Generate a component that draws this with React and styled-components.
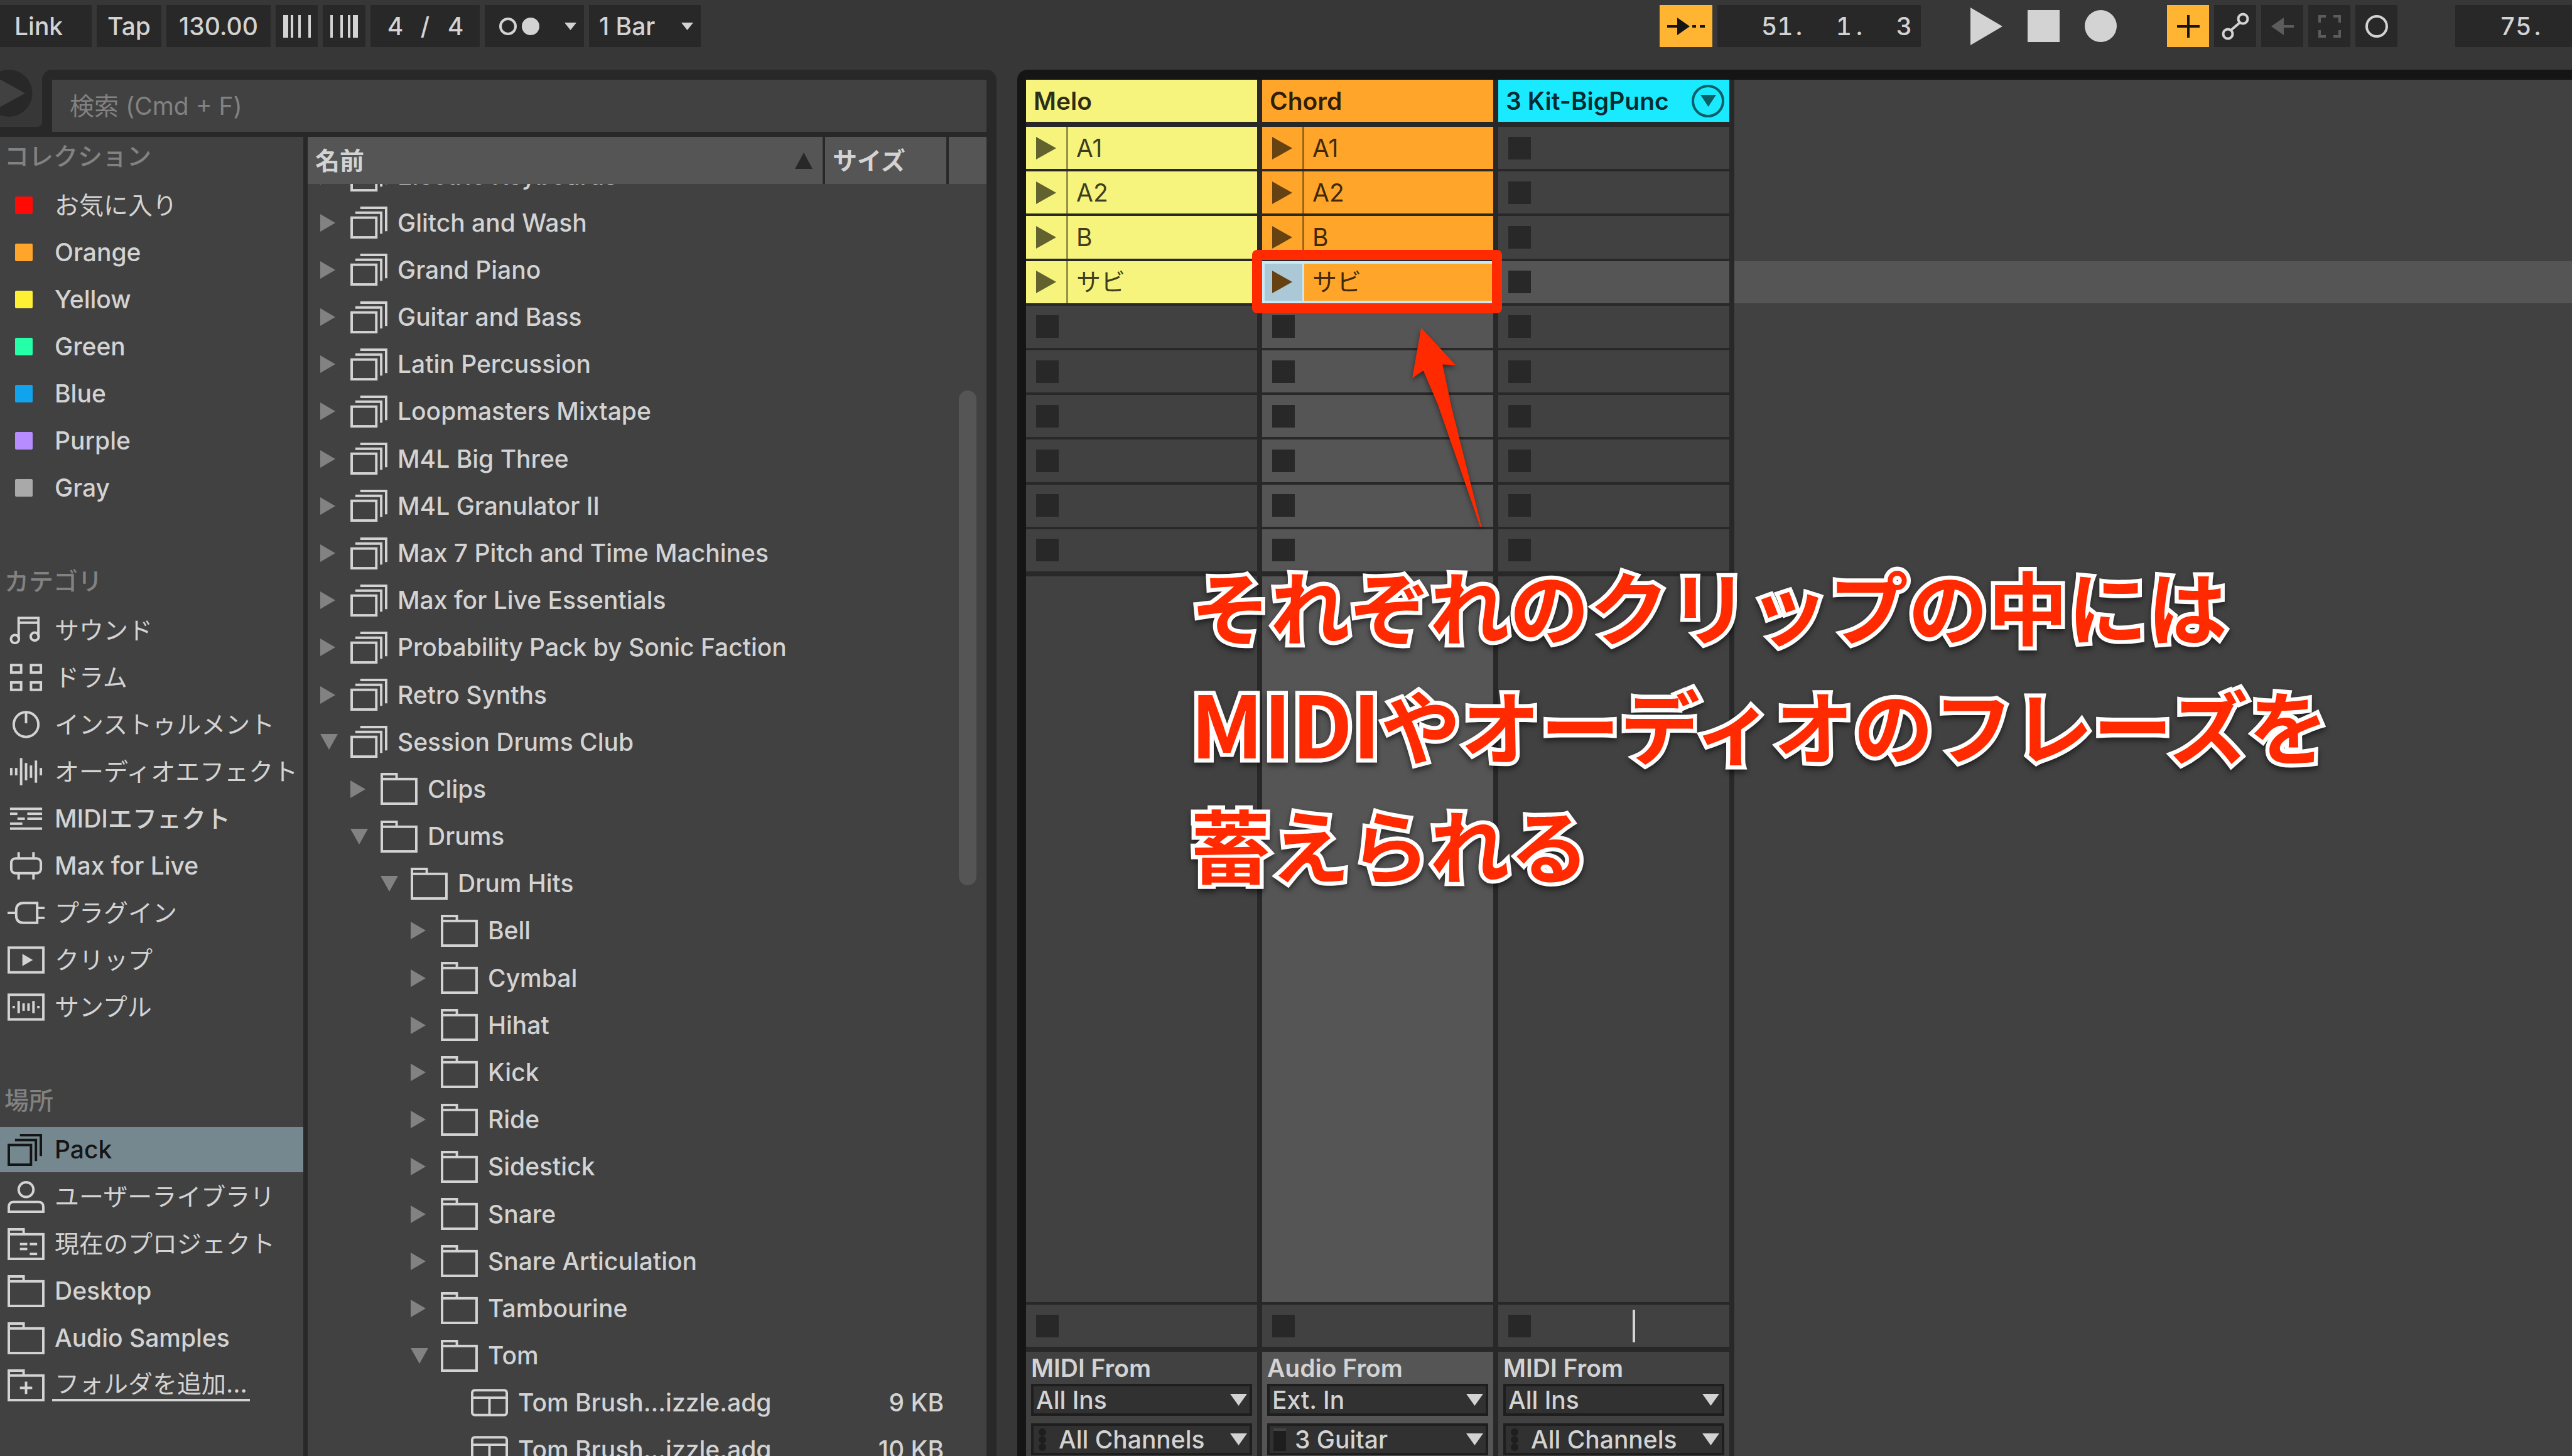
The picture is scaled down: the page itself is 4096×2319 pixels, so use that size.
import React from "react";
import styled, { createGlobalStyle, css } from "styled-components";

const c = {
  bar: "#373737",
  dark: "#282828",
  panel: "#414141",
  raised: "#555555",
  text: "#d3d3d3",
  muted: "#828282",
  black: "#151515",
  accent: "#ffb532",
  select: "#76888f",
  mark: "#ff2a00",
};

const tracks = [
  {
    name: "Melo",
    color: "#f6f47c",
    clips: ["A1", "A2", "B", "サビ"],
    input: { label: "MIDI From", source: "All Ins", channel: "All Channels", kind: "midi" },
  },
  {
    name: "Chord",
    color: "#ffa529",
    active: true,
    clips: ["A1", "A2", "B", "サビ"],
    selectedClip: 3,
    input: { label: "Audio From", source: "Ext. In", channel: "3 Guitar", kind: "audio" },
  },
  {
    name: "3 Kit-BigPunc",
    color: "#1aeaff",
    foldable: true,
    cue: true,
    clips: [],
    input: { label: "MIDI From", source: "All Ins", channel: "All Channels", kind: "midi" },
  },
];
const SCENES = Array.from({ length: 10 }, (_, i) => i);
const ACTIVE_SCENE = 3;

const collections = [
  ["お気に入り", "#ff0a05"],
  ["Orange", "#ffa529"],
  ["Yellow", "#fff034"],
  ["Green", "#25ffa8"],
  ["Blue", "#10a4ee"],
  ["Purple", "#b68cff"],
  ["Gray", "#a9a9a9"],
];
const categories = [
  ["サウンド", "sound"],
  ["ドラム", "drum"],
  ["インストゥルメント", "knob"],
  ["オーディオエフェクト", "wave"],
  ["MIDIエフェクト", "midi"],
  ["Max for Live", "max"],
  ["プラグイン", "plug"],
  ["クリップ", "clip"],
  ["サンプル", "sample"],
];
const places = [
  ["Pack", "stack"],
  ["ユーザーライブラリ", "user"],
  ["現在のプロジェクト", "project"],
  ["Desktop", "folder"],
  ["Audio Samples", "folder"],
  ["フォルダを追加...", "add"],
];
const files = [
  ["Electric Keyboards", 0, "pack"],
  ["Glitch and Wash", 0, "pack"],
  ["Grand Piano", 0, "pack"],
  ["Guitar and Bass", 0, "pack"],
  ["Latin Percussion", 0, "pack"],
  ["Loopmasters Mixtape", 0, "pack"],
  ["M4L Big Three", 0, "pack"],
  ["M4L Granulator II", 0, "pack"],
  ["Max 7 Pitch and Time Machines", 0, "pack"],
  ["Max for Live Essentials", 0, "pack"],
  ["Probability Pack by Sonic Faction", 0, "pack"],
  ["Retro Synths", 0, "pack"],
  ["Session Drums Club", 0, "pack", true],
  ["Clips", 1, "folder"],
  ["Drums", 1, "folder", true],
  ["Drum Hits", 2, "folder", true],
  ["Bell", 3, "folder"],
  ["Cymbal", 3, "folder"],
  ["Hihat", 3, "folder"],
  ["Kick", 3, "folder"],
  ["Ride", 3, "folder"],
  ["Sidestick", 3, "folder"],
  ["Snare", 3, "folder"],
  ["Snare Articulation", 3, "folder"],
  ["Tambourine", 3, "folder"],
  ["Tom", 3, "folder", true],
  ["Tom Brush...izzle.adg", 4, "device", false, "9 KB"],
  ["Tom Brush...izzle.adg", 4, "device", false, "10 KB"],
];

const Global = createGlobalStyle`
  *, *::before, *::after { box-sizing: border-box; }
  body { margin: 0; background: ${c.bar}; }
  body, button, input, select {
    font-family: Inter, "Noto Sans CJK JP", sans-serif;
    font-size: 39px;
    font-weight: 500;
    line-height: 48px;
    color: ${c.text};
  }
  button, input, select { margin: 0; padding: 0; border: 0; border-radius: 0; background: none; }
  svg { display: block; flex: none; }
`;

/* ---------- icons ---------- */
const folderShape = (
  <>
    <rect x="2" y="10" width="56" height="40" />
    <path d="M2 10V2H26V10" />
  </>
);
const bars = (list) => list.map(([x, y, w, h]) => <rect key={x + "-" + y} x={x} y={y} width={w} height={h} fill="currentColor" stroke="none" />);

const shapes = {
  sound: [44, <><path d="M18 36V2H50V32M18 9.500H50" /><circle cx="12" cy="36" r="6.500" /><circle cx="44" cy="32" r="6.500" /></>],
  drum: [44, <><rect x="6" y="2" width="16" height="12" /><rect x="38" y="2" width="16" height="12" /><rect x="6" y="30" width="16" height="12" /><rect x="38" y="30" width="16" height="12" /></>],
  knob: [44, <><circle cx="30" cy="22" r="20" /><path d="M30 2V20" /></>],
  wave: [44, bars([[4, 16, 4, 12], [12, 16, 4, 12], [20, 0, 4, 44], [28, 8, 4, 28], [36, 12, 4, 20], [44, 4, 4, 36], [52, 16, 4, 12]])],
  midi: [36, bars([[4, 0, 52, 4], [4, 8, 12, 4], [32, 8, 24, 4], [16, 16, 12, 4], [32, 16, 24, 4], [4, 24, 20, 4], [4, 32, 52, 4]])],
  max: [44, <><rect x="6" y="10" width="48" height="24" rx="7" /><path d="M18 0V10M42 0V10M18 34V44M42 34V44" /></>],
  plug: [36, <><path d="M48 2V34H26Q14 34 14 22V14Q14 2 26 2ZM0 18H14M48 10H60M48 26H60" /></>],
  clip: [44, <><rect x="2" y="2" width="56" height="40" /><path d="M24 12L41 22L24 32Z" fill="currentColor" stroke="none" /></>],
  sample: [44, <><rect x="2" y="2" width="56" height="40" />{bars([[8, 20, 4, 4], [16, 12, 4, 20], [24, 16, 4, 12], [32, 16, 4, 12], [40, 12, 4, 20], [48, 20, 4, 4]])}</>],
  stack: [52, <><rect x="2" y="18" width="36" height="32" /><path d="M12 10H46V44M20 2H54V36" /></>],
  pack: [52, <><rect x="2" y="18" width="40" height="32" /><path d="M8 10H50V44M16 2H58V40" /></>],
  folder: [52, folderShape],
  project: [52, <>{folderShape}{bars([[20, 24, 12, 4], [36, 24, 12, 4], [20, 32, 12, 4], [36, 40, 12, 4]])}</>],
  add: [52, <>{folderShape}<path d="M30 20V40M20 30H40" /></>],
  user: [52, <><circle cx="30" cy="14" r="12" /><path d="M2 50V42Q2 34 10 34H50Q58 34 58 42V50Z" /></>],
  device: [44, <><rect x="2" y="2" width="56" height="40" rx="4" /><path d="M2 14H58M30 14V42" /></>],
};

function Icon({ name }) {
  const [h, body] = shapes[name];
  return (
    <svg width="59" height={Math.round(h * 0.989)} viewBox={`0 0 60 ${h}`} fill="none" stroke="currentColor" strokeWidth="4" aria-hidden="true">
      {body}
    </svg>
  );
}

const Glyph = ({ w, h, children, ...rest }) => (
  <svg width={w} height={h} viewBox={`0 0 ${w} ${h}`} fill="currentColor" aria-hidden="true" {...rest}>
    {children}
  </svg>
);
const Down = ({ w, h }) => <Glyph w={w} h={h}><path d={`M0 0H${w}L${w / 2} ${h}Z`} /></Glyph>;
const Right = ({ w, h }) => <Glyph w={w} h={h}><path d={`M0 0L${w} ${h / 2}L0 ${h}Z`} /></Glyph>;

/* ---------- frame ---------- */
const Shell = styled.div`
  display: flex;
  flex-direction: column;
  height: 100vh;
  overflow: hidden;
  background: ${c.bar};
`;
const Toolbar = styled.header`
  display: flex;
  flex: none;
  padding: 8px 0 36px;
`;
const Group = styled.div`
  display: flex;
  align-items: center;
  gap: ${(p) => p.$gap || 8}px;
  margin-left: ${(p) => p.$before || 0}px;
`;
const Spacer = styled.div`
  flex: 1;
`;
const Tool = styled.button`
  display: flex;
  align-items: center;
  justify-content: ${(p) => p.$justify || "center"};
  gap: 8px;
  width: ${(p) => p.$w}px;
  height: 67px;
  padding: 0 ${(p) => p.$end || 0}px 0 ${(p) => p.$start || 0}px;
  background: ${(p) => (p.$on ? c.accent : c.dark)};
  color: ${(p) => (p.$on ? c.black : p.$dim ? "#5c5c5c" : c.text)};
  white-space: pre;
  > svg:last-child:not(:first-child) {
    margin-left: ${(p) => (p.$menu ? "auto" : "0")};
  }
`;
const Counter = styled.span`
  display: flex;
  font-variant-numeric: tabular-nums;
`;
const Field = styled.span`
  width: ${(p) => p.$cells * 24}px;
  text-align: ${(p) => (p.$center ? "center" : "right")};
`;
const Transport = styled.button`
  display: flex;
  align-items: center;
  height: 67px;
`;
const Work = styled.main`
  display: flex;
  flex: 1;
  min-height: 0;
`;

/* ---------- browser ---------- */
const Browser = styled.section`
  display: flex;
  flex-direction: column;
  flex: none;
  width: 1587px;
  margin-right: 33px;
`;
const BrowserTop = styled.div`
  display: flex;
  flex: none;
  height: 107px;
`;
const PreviewCell = styled.div`
  width: 67px;
  background: ${c.dark};
`;
const Preview = styled.button`
  display: block;
  width: 67px;
  height: 91px;
  overflow: hidden;
  background: ${c.bar};
  border-bottom-right-radius: 8px;
  svg {
    margin: 0 0 16px -24px;
  }
`;
const SearchShell = styled.div`
  flex: 1;
  padding: 16px 16px 8px;
  background: ${c.dark};
  border-radius: 16px 16px 0 0;
`;
const Search = styled.input`
  display: block;
  width: 100%;
  height: 83px;
  padding: 0 28px;
  background: ${c.panel};
  outline: 0;
  &::placeholder {
    color: ${c.muted};
    opacity: 1;
    font-weight: 400;
  }
`;
const BrowserBody = styled.div`
  display: flex;
  flex: 1;
  min-height: 0;
  gap: 7px;
  padding-right: 16px;
  background: ${c.dark};
`;
const Sidebar = styled.nav`
  display: flex;
  flex-direction: column;
  flex: none;
  gap: 82px;
  width: 483px;
  background: ${c.panel};
`;
const Section = styled.div`
  display: flex;
  flex-direction: column;
`;
const Heading = styled.h2`
  margin: 0 0 8px;
  padding: 7px;
  font-size: 39px;
  font-weight: 500;
  line-height: 48px;
  color: ${c.muted};
`;
const Place = styled.button`
  display: flex;
  align-items: center;
  gap: 16px;
  height: 75px;
  padding-left: 12px;
  border-top: 3px solid transparent;
  background: ${(p) => (p.$on ? c.select : "transparent")};
  background-clip: padding-box;
  color: ${(p) => (p.$on ? c.black : c.text)};
  font-weight: ${(p) => (p.$jp ? 400 : 500)};
  white-space: nowrap;
`;
const Swatch = styled.span`
  width: 28px;
  height: 28px;
  margin: 0 19px 0 12px;
  border-radius: 2px;
  background: ${(p) => p.$color};
`;
const PlaceText = styled.span`
  ${(p) =>
    p.$underlined &&
    css`
      margin-left: -4px;
      padding: 0 4px;
      border-bottom: 4px solid ${c.text};
    `}
`;
const ListPane = styled.div`
  position: relative;
  flex: 1;
  min-width: 0;
  overflow: hidden;
  background: ${c.panel};
`;
const Table = styled.table`
  display: flex;
  flex-direction: column;
  height: 100%;
`;
const Head = styled.thead`
  display: block;
  flex: none;
  z-index: 1;
  background: ${c.dark};
`;
const HeadRow = styled.tr`
  display: flex;
  gap: 4px;
`;
const HeadCell = styled.th`
  display: flex;
  align-items: center;
  justify-content: space-between;
  flex: ${(p) => (p.$w ? `0 0 ${p.$w}px` : 1)};
  height: 75px;
  padding: 0 16px 0 12px;
  background: ${c.raised};
  font-weight: 700;
  svg {
    color: ${c.dark};
  }
`;
const Rows = styled.tbody`
  display: grid;
  flex: 1;
  grid-template-rows: repeat(${files.length}, minmax(0, 1fr));
  margin: -51px 0 -28px;
`;
const Row = styled.tr`
  display: flex;
  align-items: center;
  padding: 0 68px 0 ${(p) => 20 + p.$level * 48}px;
`;
const NameCell = styled.td`
  display: flex;
  align-items: center;
  flex: 1;
  padding: 0;
  white-space: nowrap;
`;
const Toggle = styled.button`
  display: flex;
  width: 48px;
  color: ${c.muted};
`;
const NoToggle = styled.span`
  width: 48px;
`;
const FileName = styled.span`
  margin-left: 16px;
`;
const SizeCell = styled.td`
  padding: 0;
`;
const Scrollbar = styled.div`
  position: absolute;
  top: 404px;
  right: 16px;
  width: 28px;
  height: 788px;
  border-radius: 14px;
  background: ${c.raised};
`;

/* ---------- session ---------- */
const Session = styled.section`
  position: relative;
  display: flex;
  flex: 1;
  min-width: 0;
  padding: 16px 0 0 14px;
  background: ${c.black};
  border-top-left-radius: 16px;
`;
const Tracks = styled.div`
  display: flex;
  flex: none;
  gap: 8px;
  padding-right: 8px;
  background: ${c.dark};
`;
const Track = styled.div`
  display: flex;
  flex-direction: column;
  width: 368px;
`;
const TrackHeader = styled.div`
  display: flex;
  align-items: center;
  justify-content: space-between;
  flex: none;
  height: 67px;
  margin-bottom: 8px;
  padding: 0 8px 0 12px;
  background: ${(p) => p.$color};
  color: rgba(0, 0, 0, 0.82);
  font-weight: 600;
  white-space: nowrap;
`;
const Fold = styled.button`
  display: flex;
  align-items: center;
  justify-content: center;
  width: 52px;
  height: 52px;
  border: 4px solid rgba(0, 0, 0, 0.6);
  border-radius: 50%;
  color: rgba(0, 0, 0, 0.6);
`;
const Slots = styled.div`
  display: grid;
  flex: none;
  grid-template-rows: repeat(10, 1fr);
  gap: 4px;
  height: 708px;
`;
const EmptySlot = styled.button`
  display: flex;
  align-items: center;
  padding-left: 16px;
  background: ${(p) => (p.$lit ? c.raised : c.panel)};
`;
const StopMark = styled.span`
  width: 36px;
  height: 36px;
  background: ${c.dark};
`;
const Clip = styled.div`
  position: relative;
  display: flex;
  min-height: 0;
  background: ${(p) => p.$color};
  color: rgba(0, 0, 0, 0.75);
  ${(p) =>
    p.$selected &&
    css`
      border: 4px solid #cbe8f6;
      border-width: 4px 2px 4px 4px;
    `}
`;
const Launch = styled.button`
  display: flex;
  align-items: center;
  width: ${(p) => (p.$selected ? 63 : 67)}px;
  padding-left: ${(p) => (p.$selected ? 12 : 16)}px;
  border-right: 3px solid ${(p) => (p.$selected ? "#cbe8f6" : "rgba(0, 0, 0, 0.4)")};
  background: ${(p) => (p.$selected ? "#abc8d7" : "transparent")};
  color: ${(p) => (p.$warm ? "#664212" : "#62622f")};
`;
const ClipName = styled.button`
  flex: 1;
  padding-left: 13px;
  text-align: left;
  font-weight: 400;
  color: inherit;
`;
const ClipMark = styled.span`
  position: absolute;
  z-index: 2;
  inset: -22px -16px -20px -20px;
  border: 16px solid ${c.mark};
  border-radius: 8px;
  pointer-events: none;
`;
const TrackBody = styled.div`
  flex: 1;
  margin: 8px 0 4px;
  background: ${(p) => (p.$lit ? c.raised : c.panel)};
`;
const StopRow = styled.div`
  display: flex;
  align-items: center;
  flex: none;
  height: 67px;
  margin-bottom: 8px;
  padding-left: 16px;
  background: ${c.panel};
`;
const CueLine = styled.span`
  width: 4px;
  height: 52px;
  margin-left: 162px;
  background: ${c.text};
`;
const Routing = styled.div`
  display: flex;
  flex-direction: column;
  flex: none;
  gap: 12px;
  height: 166px;
  padding: 0 8px;
  overflow: hidden;
  background: ${(p) => (p.$lit ? c.raised : c.panel)};
`;
const RoutingLabel = styled.label`
  height: 39px;
  font-weight: 600;
  line-height: 52px;
`;
const SelectBox = styled.div`
  position: relative;
  flex: none;
  height: 51px;
`;
const Select = styled.select`
  appearance: none;
  display: block;
  width: 100%;
  height: 100%;
  padding-left: ${(p) => (p.$icon ? 40 : 4)}px;
  border: 4px solid #1e1e1e;
  background: #313131;
  line-height: 43px;
`;
const SelectArrow = styled.span`
  position: absolute;
  top: 16px;
  right: 8px;
  pointer-events: none;
`;
const SelectIcon = styled.span`
  position: absolute;
  top: 8px;
  left: 10px;
  color: #1e1e1e;
  pointer-events: none;
`;
const Scenes = styled.div`
  flex: 1;
  padding-top: 75px;
  background: ${c.panel};
`;
const SceneBand = styled.div`
  background: ${(p) => (p.$lit ? c.raised : "transparent")};
`;

/* ---------- notes laid over the session grid ---------- */
const Arrow = styled.svg`
  position: absolute;
  z-index: 3;
  top: 410px;
  left: 629px;
  overflow: visible;
  filter: drop-shadow(0 4px 4px rgba(0, 0, 0, 0.5));
`;
const Caption = styled.p`
  position: absolute;
  z-index: 3;
  top: 757px;
  left: 276px;
  margin: 0;
  font-family: "Noto Sans CJK JP", sans-serif;
  font-size: 127px;
  font-weight: 700;
  line-height: 190px;
  white-space: nowrap;
  color: ${c.mark};
  -webkit-text-stroke: 13px #fff;
  stroke-linejoin: round;
  paint-order: stroke fill;
  filter: drop-shadow(0 5px 4px rgba(0, 0, 0, 0.5));
`;
const Latin = styled.span`
  font-size: 136px;
  line-height: 1;
`;

function TopBar() {
  return (
    <Toolbar>
      <Group>
        <Tool $w={146} $justify="flex-start" $start={23}>Link</Tool>
        <Tool $w={103}>Tap</Tool>
        <Tool $w={166}>130.00</Tool>
        <Tool $w={67} aria-label="Nudge down">
          <Glyph w={44} h={36}><path d="M0 0H8V36H0ZM12 0H16V36H12ZM24 0H28V36H24ZM40 0H44V36H40Z" /></Glyph>
        </Tool>
        <Tool $w={68} aria-label="Nudge up">
          <Glyph w={44} h={36}><path d="M0 0H4V36H0ZM16 0H20V36H16ZM28 0H32V36H28ZM36 0H44V36H36Z" /></Glyph>
        </Tool>
        <Tool $w={174}>
          <Counter>
            <Field $cells={1}>4</Field>
            <Field $cells={3} $center>/</Field>
            <Field $cells={1}>4</Field>
          </Counter>
        </Tool>
        <Tool $w={158} $justify="flex-start" $start={23} $end={12} $menu aria-label="Metronome">
          <Glyph w={28} h={28}><circle cx="14" cy="14" r="12" fill="none" stroke="currentColor" strokeWidth="4" /></Glyph>
          <Glyph w={28} h={28}><circle cx="14" cy="14" r="14" /></Glyph>
          <Down w={19} h={12} />
        </Tool>
        <Tool $w={178} $justify="space-between" $start={16} $end={12}>
          1 Bar
          <Down w={19} h={12} />
        </Tool>
      </Group>
      <Spacer />
      <Group>
        <Tool $w={84} $on aria-label="Follow">
          <Glyph w={60} h={28}><path d="M0 12H16V0L36 14L16 28V16H0ZM40 12H46V16H40ZM52 12H60V16H52Z" /></Glyph>
        </Tool>
        <Tool $w={324} $justify="flex-end" $end={14}>
          <Counter>
            <Field $cells={2}>51</Field>
            <Field $cells={1} $center>.</Field>
            <Field $cells={3}>1</Field>
            <Field $cells={1} $center>.</Field>
            <Field $cells={3}>3</Field>
          </Counter>
        </Tool>
      </Group>
      <Group $gap={40} $before={79}>
        <Transport aria-label="Play"><Right w={51} h={60} /></Transport>
        <Transport aria-label="Stop"><Glyph w={51} h={51}><path d="M0 0H51V51H0Z" /></Glyph></Transport>
        <Transport aria-label="Record"><Glyph w={51} h={51}><circle cx="25.500" cy="25.500" r="25.500" /></Glyph></Transport>
      </Group>
      <Group $before={80}>
        <Tool $w={67} $on aria-label="Overdub">
          <Glyph w={36} h={36}><path d="M16 0H20V16H36V20H20V36H16V20H0V16H16Z" /></Glyph>
        </Tool>
        <Tool $w={67} aria-label="Automation arm">
          <Glyph w={44} h={44}>
            <g fill="none" stroke="currentColor" strokeWidth="4">
              <circle cx="10" cy="34" r="7.500" /><circle cx="34" cy="10" r="7.500" /><path d="M15 28L29 16" />
            </g>
          </Glyph>
        </Tool>
        <Tool $w={67} $dim aria-label="Re-enable automation">
          <Glyph w={36} h={28}><path d="M0 14L20 0V12H36V16H20V28Z" /></Glyph>
        </Tool>
        <Tool $w={67} $dim aria-label="Capture">
          <Glyph w={36} h={36}><path d="M2 12V2H12M24 2H34V12M34 24V34H24M12 34H2V24" fill="none" stroke="currentColor" strokeWidth="4" /></Glyph>
        </Tool>
        <Tool $w={67} aria-label="Session record">
          <Glyph w={36} h={36}><circle cx="18" cy="18" r="16" fill="none" stroke="currentColor" strokeWidth="4" /></Glyph>
        </Tool>
      </Group>
      <Group $before={92}>
        <Tool $w={186} $justify="flex-start" $start={71}>
          <Counter>
            <Field $cells={2}>75</Field>
            <Field $cells={1} $center>.</Field>
          </Counter>
        </Tool>
      </Group>
    </Toolbar>
  );
}

function BrowserPanel() {
  return (
    <Browser>
      <BrowserTop>
        <PreviewCell>
          <Preview aria-label="Preview">
            <Glyph w={76} h={75}><circle cx="38" cy="37.500" r="37.500" fill={c.dark} /><path d="M16 11L64 37.500L16 64Z" fill={c.panel} /></Glyph>
          </Preview>
        </PreviewCell>
        <SearchShell>
          <Search type="text" aria-label="検索" placeholder="検索 (Cmd + F)" />
        </SearchShell>
      </BrowserTop>
      <BrowserBody>
        <Sidebar>
          <Section>
            <Heading>コレクション</Heading>
            {collections.map(([name, color], i) => (
              <Place key={name} $jp={i === 0}><Swatch $color={color} />{name}</Place>
            ))}
          </Section>
          <Section>
            <Heading>カテゴリ</Heading>
            {categories.map(([name, icon]) => (
              <Place key={name} $jp={!/[A-Z]/.test(name)}><Icon name={icon} />{name}</Place>
            ))}
          </Section>
          <Section>
            <Heading>場所</Heading>
            {places.map(([name, icon], i) => (
              <Place key={name} $on={i === 0} $jp={!/[A-Z]/.test(name)}>
                <Icon name={icon} />
                <PlaceText $underlined={icon === "add"}>{name}</PlaceText>
              </Place>
            ))}
          </Section>
        </Sidebar>
        <ListPane>
          <Table cellSpacing="0">
            <Head>
              <HeadRow>
                <HeadCell>名前<Glyph w={28} h={26}><path d="M14 0L28 26H0Z" /></Glyph></HeadCell>
                <HeadCell $w={193}>サイズ</HeadCell>
                <HeadCell $w={60} />
              </HeadRow>
            </Head>
            <Rows>
              {files.map(([name, level, icon, open, size], i) => (
                <Row key={i} $level={level}>
                  <NameCell>
                    {icon === "device" ? (
                      <NoToggle />
                    ) : (
                      <Toggle aria-label={open ? "Collapse" : "Expand"}>{open ? <Down w={28} h={25} /> : <Right w={24} h={28} />}</Toggle>
                    )}
                    <Icon name={icon} />
                    <FileName>{name}</FileName>
                  </NameCell>
                  {size && <SizeCell>{size}</SizeCell>}
                </Row>
              ))}
            </Rows>
          </Table>
          <Scrollbar />
        </ListPane>
      </BrowserBody>
    </Browser>
  );
}

function TrackColumn({ track, index }) {
  const { input } = track;
  const id = `track-${index}`;
  return (
    <Track>
      <TrackHeader $color={track.color}>
        {track.name}
        {track.foldable && <Fold aria-label="Unfold"><Down w={25} h={19} /></Fold>}
      </TrackHeader>
      <Slots>
        {SCENES.map((s) => {
          const clip = track.clips[s];
          const selected = track.selectedClip === s;
          if (!clip)
            return (
              <EmptySlot key={s} aria-label="Stop slot" $lit={track.active || s === ACTIVE_SCENE}><StopMark /></EmptySlot>
            );
          return (
            <Clip key={s} $color={track.color} $selected={selected}>
              <Launch aria-label="Launch clip" $selected={selected} $warm={track.active}><Right w={32} h={36} /></Launch>
              <ClipName>{clip}</ClipName>
              {selected && <ClipMark />}
            </Clip>
          );
        })}
      </Slots>
      <TrackBody $lit={track.active} />
      <StopRow>
        <StopMark />
        {track.cue && <CueLine />}
      </StopRow>
      <Routing $lit={track.active}>
        <RoutingLabel htmlFor={`${id}-source`}>{input.label}</RoutingLabel>
        <SelectBox>
          <Select id={`${id}-source`}><option>{input.source}</option></Select>
          <SelectArrow><Down w={27} h={19} /></SelectArrow>
        </SelectBox>
        <SelectBox>
          <Select $icon aria-label={`${input.label} channel`}><option>{input.channel}</option></Select>
          <SelectIcon>
            {input.kind === "midi" ? (
              <Glyph w={16} h={36}><circle cx="8" cy="6" r="6" /><circle cx="8" cy="18" r="6" /><circle cx="8" cy="30" r="6" /></Glyph>
            ) : (
              <Glyph w={20} h={36}><path d="M0 0H20V4H0Z" fill={c.panel} /><path d="M0 4H20V36H0Z" /></Glyph>
            )}
          </SelectIcon>
          <SelectArrow><Down w={27} h={19} /></SelectArrow>
        </SelectBox>
      </Routing>
    </Track>
  );
}

export default function App() {
  return (
    <Shell>
      <Global />
      <TopBar />
      <Work>
        <BrowserPanel />
        <Session>
          <Tracks>
            {tracks.map((t, i) => <TrackColumn key={i} track={t} index={i} />)}
          </Tracks>
          <Scenes>
            <Slots>
              {SCENES.map((s) => <SceneBand key={s} $lit={s === ACTIVE_SCENE} />)}
            </Slots>
          </Scenes>
          <Arrow width="111" height="319" viewBox="0 0 112 322" aria-hidden="true">
            <path d="M14.400 1L70 61L48.800 60L63 128L111.400 321H109.500L41 124L17.800 70L0 82Z" fill={c.mark} />
          </Arrow>
          <Caption>
            それぞれのクリップの中には<br />
            <Latin>MIDI</Latin>やオーディオのフレーズを<br />
            蓄えられる
          </Caption>
        </Session>
      </Work>
    </Shell>
  );
}
